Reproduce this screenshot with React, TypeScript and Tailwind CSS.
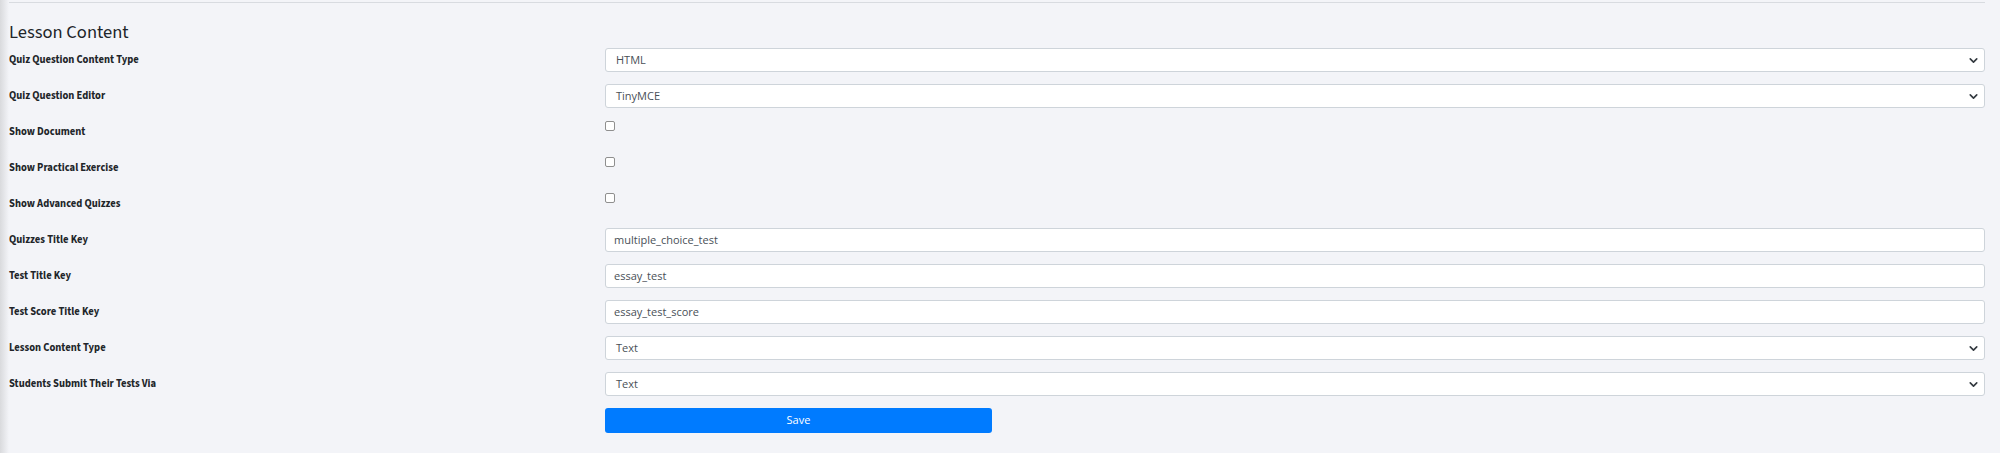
import { ChevronDown } from 'lucide-react'

type Row =
  | { label: string; kind: 'select'; value: string }
  | { label: string; kind: 'check' }
  | { label: string; kind: 'text'; value: string }

const rows: Row[] = [
  { label: 'Quiz Question Content Type', kind: 'select', value: 'HTML' },
  { label: 'Quiz Question Editor', kind: 'select', value: 'TinyMCE' },
  { label: 'Show Document', kind: 'check' },
  { label: 'Show Practical Exercise', kind: 'check' },
  { label: 'Show Advanced Quizzes', kind: 'check' },
  { label: 'Quizzes Title Key', kind: 'text', value: 'multiple_choice_test' },
  { label: 'Test Title Key', kind: 'text', value: 'essay_test' },
  { label: 'Test Score Title Key', kind: 'text', value: 'essay_test_score' },
  { label: 'Lesson Content Type', kind: 'select', value: 'Text' },
  { label: 'Students Submit Their Tests Via', kind: 'select', value: 'Text' },
]

function Field({ row }: { row: Row }) {
  if (row.kind === 'check') {
    return (
      <div className="h-6 flex items-start pt-[1px]">
        <span className="block size-[10px] rounded-[2px] border border-[#8f8f8f] bg-white" />
      </div>
    )
  }
  return (
    <div className="h-6 flex items-center justify-between rounded-[3px] border border-[#ced4da] bg-white text-[11px] text-[#495057] font-['Open_Sans',sans-serif]">
      <span className={row.kind === 'select' ? 'pl-[10px]' : 'pl-[8px]'}>{row.value}</span>
      {row.kind === 'select' && <ChevronDown className="mr-[4px] size-[13px] text-[#343a40]" strokeWidth={3} />}
    </div>
  )
}

export default function App() {
  return (
    <div className="min-h-[453px] bg-[#f3f4f8] flex font-['Source_Sans_3',sans-serif]">
      <div className="w-[9px] shrink-0 bg-gradient-to-r from-[#d9dadd] to-[#f3f4f8]" />
      <div className="flex-1 pr-[15px]">
        <div className="h-[3px] border-b border-[#d8dbe0]" />
        <h2 className="mt-[17px] text-[18.5px] leading-[24px] text-[#212529]">Lesson Content</h2>
        <div className="mt-[4px] grid grid-cols-[596px_1fr] gap-y-3">
          {rows.map(row => (
            <div key={row.label} className="contents">
              <label className="h-6 flex items-center text-[10.6px] font-bold text-[#212529]">{row.label}</label>
              <Field row={row} />
            </div>
          ))}
          <div />
          <button className="h-[25px] w-[387px] rounded-[3px] bg-[#007bff] text-[11px] text-white font-['Open_Sans',sans-serif]">
            Save
          </button>
        </div>
      </div>
    </div>
  )
}
